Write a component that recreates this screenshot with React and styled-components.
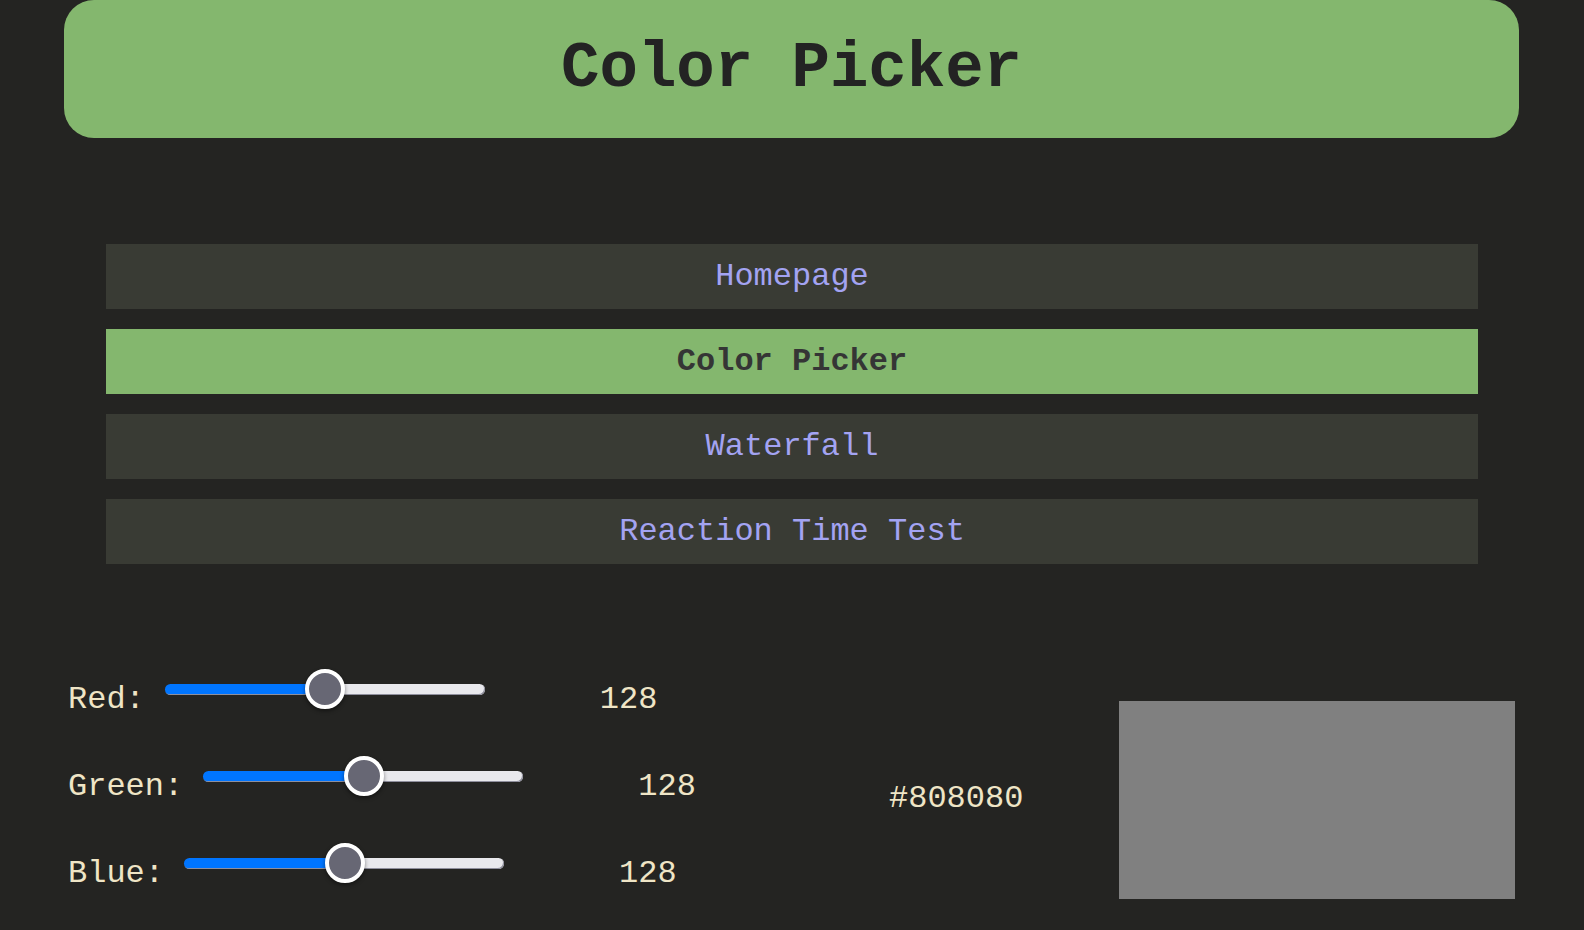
import React, { useState } from "react";
import styled, { createGlobalStyle } from "styled-components";

const GlobalStyle = createGlobalStyle`
  body {
    margin: 0;
    background-color: #242422;
    font-family: "Liberation Mono", "Courier New", monospace;
  }
`;

const pages = ["Homepage", "Color Picker", "Waterfall", "Reaction Time Test"];

function Slider({ label, value, onChange }) {
  // fill up to the thumb centre
  const fill = (value / 255) * 100;
  return (
    <Row>
      <Label>{label}:</Label>
      <Range
        type="range"
        min="0"
        max="255"
        value={value}
        $fill={fill}
        onChange={(e) => onChange(Number(e.target.value))}
      />
      <Value>{value}</Value>
    </Row>
  );
}

const toHex = (n) => n.toString(16).padStart(2, "0").toUpperCase();

export default function App() {
  const [red, setRed] = useState(128);
  const [green, setGreen] = useState(128);
  const [blue, setBlue] = useState(128);
  const hex = "#" + toHex(red) + toHex(green) + toHex(blue);

  return (
    <>
      <GlobalStyle />
      <Page>
        <Header>
          <Title>Color Picker</Title>
        </Header>

        <Nav>
          {pages.map((p) => (
            <NavItem key={p} $active={p === "Color Picker"}>
              {p}
            </NavItem>
          ))}
        </Nav>

        <Picker>
          <Sliders>
            <Slider label="Red" value={red} onChange={setRed} />
            <Slider label="Green" value={green} onChange={setGreen} />
            <Slider label="Blue" value={blue} onChange={setBlue} />
          </Sliders>
          <Hex>{hex}</Hex>
          <Swatch style={{ backgroundColor: hex }} />
        </Picker>
      </Page>
    </>
  );
}

const Page = styled.div`
  padding: 0 65px 0 64px;
`;

const Header = styled.header`
  height: 138px;
  display: flex;
  justify-content: center;
  align-items: center;
  background-color: #84b76e;
  border-radius: 30px;
`;

const Title = styled.h1`
  margin: 0;
  font-size: 64px;
  font-weight: bold;
  color: #232323;
`;

const Nav = styled.nav`
  display: flex;
  flex-direction: column;
  gap: 20px;
  margin: 106px 41px 0 42px;
`;

const NavItem = styled.div`
  height: 65px;
  display: flex;
  justify-content: center;
  align-items: center;
  font-size: 32px;
  background-color: ${(p) => (p.$active ? "#84b76e" : "#393b34")};
  color: ${(p) => (p.$active ? "#353535" : "#a3a3f2")};
  font-weight: ${(p) => (p.$active ? "bold" : "normal")};
`;

const Picker = styled.section`
  display: flex;
  align-items: flex-start;
  margin-top: 106px;
  padding-left: 4px;
`;

const Sliders = styled.div`
  width: 821px;
  display: flex;
  flex-direction: column;
  gap: 49px;
`;

const Row = styled.div`
  display: flex;
  align-items: flex-start;
  height: 38px;
`;

const Text = styled.span`
  font-size: 32px;
  line-height: 36px;
  color: #efe5c6;
  white-space: pre;
`;

const Label = styled(Text)`
  margin-top: 12px;
`;

const Value = styled(Text)`
  margin-top: 12px;
  margin-left: 115px;
`;

const Range = styled.input`
  -webkit-appearance: none;
  appearance: none;
  width: 320px;
  height: 38px;
  margin: 0 0 0 20px;
  background: transparent;

  &::-webkit-slider-runnable-track {
    height: 11px;
    border-radius: 6px;
    background: linear-gradient(
      to right,
      #0075ff 0%,
      #0075ff ${(p) => p.$fill}%,
      #e9e9ed ${(p) => p.$fill}%,
      #e9e9ed 100%
    );
    box-shadow: inset -1px -1px 0 #8f8f9d;
  }

  &::-webkit-slider-thumb {
    -webkit-appearance: none;
    width: 40px;
    height: 40px;
    margin-top: -14.5px;
    border-radius: 50%;
    background: #676774;
    border: 4px solid #ffffff;
    box-sizing: border-box;
    box-shadow: 0 2px 4px rgba(0, 0, 0, 0.45);
  }
`;

const Hex = styled(Text)`
  width: 230px;
  margin-top: 111px;
  display: block;
`;

const Swatch = styled.div`
  width: 396px;
  height: 198px;
  margin-top: 31px;
`;
